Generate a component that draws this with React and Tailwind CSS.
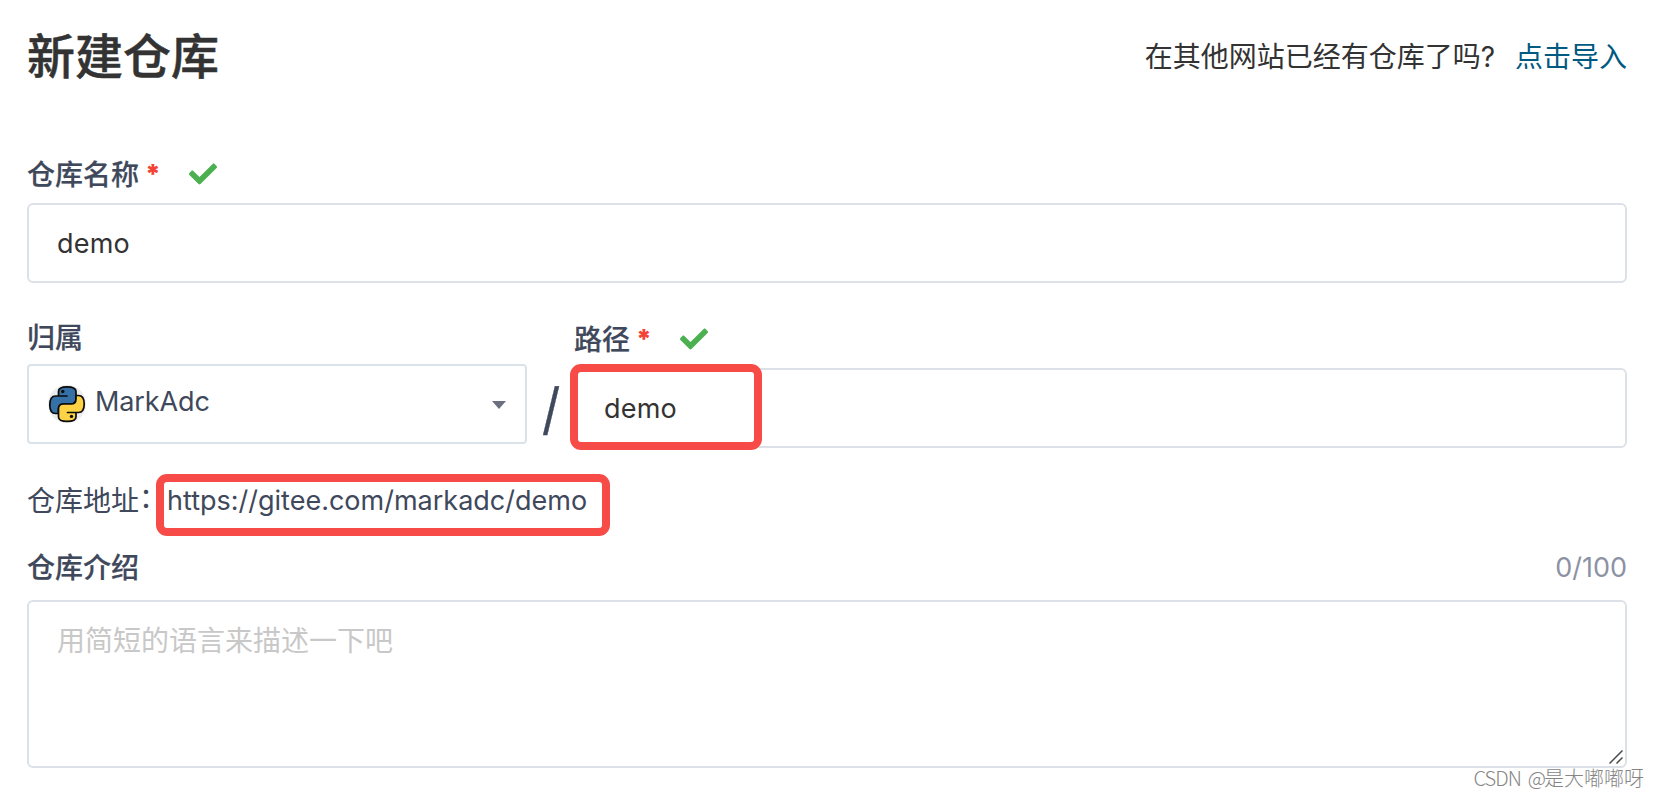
import { FaCheck } from 'react-icons/fa';

const PythonAvatar = () => (
  <svg className="w-[38px] h-[38px]" viewBox="0 0 38 38">
    <circle cx="19" cy="19" r="19" fill="#ececec" />
    <g stroke="#0b0b0b" strokeWidth="1.7" strokeLinejoin="round" strokeLinecap="round">
      <path
        d="M10.5 28.5 H7.5 Q1.8 28.5 1.8 20 Q1.8 11 7.5 11 H19 H10.5 V6.5 Q10.5 1.8 19 1.8 Q28 1.8 28 6.5 V14 Q28 19 23 19 H15.5 Q10.5 19 10.5 24 Z"
        fill="#3571a6"
      />
      <path
        d="M28 10.5 H30.5 Q36.2 10.5 36.2 19 Q36.2 27.5 30.5 27.5 H19.5 H28 V32 Q28 36.4 19 36.4 Q10.5 36.4 10.5 32 V24 Q10.5 19 15.5 19 H23 Q28 19 28 14 Z"
        fill="#fdd345"
      />
    </g>
    <circle cx="14.8" cy="6.5" r="1.7" fill="#0b0b0b" />
    <circle cx="23.5" cy="31.4" r="1.7" fill="#0b0b0b" />
  </svg>
);

const RequiredLabel = ({ children }) => (
  <div className="flex items-center h-[58px] text-[28px] font-medium text-[#40485b]">
    <span className="pt-px [-webkit-text-stroke:0.2px]">{children}</span>
    <span className="w-4 ml-1.5 text-[26px] font-black text-[#f44336]">*</span>
    <FaCheck className="ml-7 text-[28px] text-[#4caf50]" />
  </div>
);

const App = () => {
  return (
    <div className="relative h-[798px] overflow-hidden bg-white pl-[27px] pr-[33px] font-[Inter,'Noto_Sans_CJK_SC',sans-serif] leading-none text-[#40485b]">
      {/* Header */}
      <header className="flex items-center justify-between h-[112px] text-[#333]">
        <h1 className="pt-0.5 text-[48px] font-medium [-webkit-text-stroke:0.5px]">新建仓库</h1>
        <div className="flex items-center gap-5 pt-0.5 text-[28px]">
          <span>在其他网站已经有仓库了吗?</span>
          <a href="#" className="text-[#005980]">点击导入</a>
        </div>
      </header>

      {/* Name */}
      <section className="pt-[33px]">
        <RequiredLabel>仓库名称</RequiredLabel>
        <div className="flex items-center h-20 border-2 border-[#dce1e8] rounded-md px-7 text-[27px] text-[#333]">
          <span className="tracking-[0.2px]">demo</span>
        </div>
      </section>

      {/* Owner and path */}
      <section className="flex pt-[27px]">
        <div className="w-[500px]">
          <div className="flex items-center h-[54px] pt-px text-[28px] font-medium [-webkit-text-stroke:0.2px]">归属</div>
          <div className="flex items-center h-20 border-2 border-[#dbe2e8] rounded px-[19px]">
            <PythonAvatar />
            <span className="ml-[9px] pb-1.5 text-[27px] tracking-[-0.1px]">MarkAdc</span>
            <svg className="ml-auto mt-0.5 w-3.5 h-2" viewBox="0 0 14 8">
              <path d="M0 0 H14 L7 8 Z" fill="#6b7080" />
            </svg>
          </div>
        </div>
        <div className="flex w-[47px] h-[138px] items-end justify-center pb-[11px] pl-0.5 text-[56px] font-normal">
          <span className="scale-x-90 [-webkit-text-stroke:0.4px]">/</span>
        </div>
        <div className="flex-1">
          <RequiredLabel>路径</RequiredLabel>
          <div className="relative flex items-center h-20 border-2 border-[#dce1e8] rounded-md px-7 text-[27px] text-[#333]">
            <span className="tracking-[0.2px]">demo</span>
            <div className="absolute -left-1.5 -top-1.5 w-48 h-[86px] border-8 border-[#f74b47] rounded-[11px]" />
          </div>
        </div>
      </section>

      {/* Repository url */}
      <div className="flex items-center h-[62px] mt-[26px]">
        <div className="flex w-[129px] pb-2 text-[28px] whitespace-nowrap">
          仓库地址<span className="-mt-[3px]">：</span>
        </div>
        <div className="flex w-[454px] h-[62px] border-8 border-[#f74b47] rounded-[11px] pl-[3px] pt-[5px] text-[27px]">
          <span>https://gitee.com/markadc/demo</span>
        </div>
      </div>

      {/* Description */}
      <section>
        <div className="flex items-center justify-between h-16 text-[28px]">
          <span className="font-medium [-webkit-text-stroke:0.2px]">仓库介绍</span>
          <span className="pb-0.5 text-[27px] text-[#8c92a4]">0/100</span>
        </div>
        <div className="relative h-[168px] border-2 border-[#dce1e8] rounded-md px-7 pt-[25px] text-[28px] text-[#c8c8c8]">
          <span>用简短的语言来描述一下吧</span>
          <svg className="absolute right-0.5 bottom-0.5 w-3.5 h-3.5" viewBox="0 0 14 14" stroke="#4a4a4a" strokeWidth="1.5">
            <path d="M0.5 13.5 L13.5 0.5 M7.5 13.5 L13.5 7.5" />
          </svg>
        </div>
      </section>

      {/* Watermark */}
      <div className="absolute right-4 bottom-2.5 flex gap-[7px] text-[20px] font-light text-[#858585] font-['Noto_Sans_CJK_SC',sans-serif]">
        <span className="tracking-[-1px]">CSDN</span>
        <span>
          <span className="tracking-[-2px]">@</span>是大嘟嘟呀
        </span>
      </div>
    </div>
  );
};

export default App;
